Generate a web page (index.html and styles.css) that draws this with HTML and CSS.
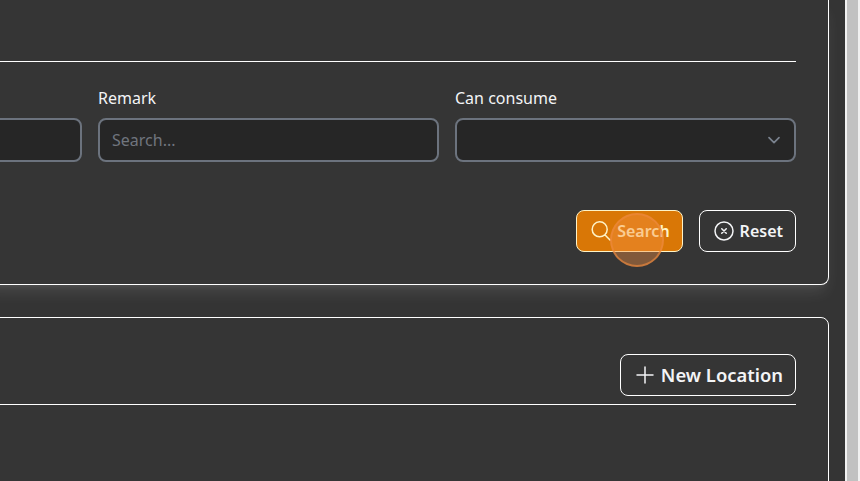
FILE: index.html
```
<!DOCTYPE html>
<html lang="en">
<head>
<meta charset="utf-8">
<title>Locations</title>
<link rel="stylesheet" href="styles.css">
</head>
<body>
<div class="window">
  <main class="page">
    <section class="card filters">
      <div class="filters-head"></div>
      <form class="fields">
        <div class="field"><span class="label"></span><div class="control"></div></div>
        <div class="field"><span class="label">Remark</span><div class="control">Search...</div></div>
        <div class="field"><span class="label">Can consume</span>
          <div class="control select">
            <svg width="20" height="20" viewBox="0 0 20 20"><path d="M5 7.7l5 5 5-5"/></svg>
          </div>
        </div>
      </form>
      <div class="actions">
        <button class="button primary">
          <svg width="24" height="24" viewBox="0 0 24 24"><path d="M21 21l-5.2-5.2m0 0A7.5 7.5 0 1 0 5.2 5.2a7.5 7.5 0 0 0 10.6 10.6z"/></svg>
          <span>Search</span>
          <i class="tap"></i>
        </button>
        <button class="button">
          <svg width="24" height="24" viewBox="0 0 24 24"><circle cx="12" cy="12" r="9"/><path d="M9.75 9.75l4.5 4.5m0-4.5l-4.5 4.5"/></svg>
          <span>Reset</span>
        </button>
      </div>
    </section>
    <section class="card results">
      <div class="results-head">
        <button class="button large">
          <svg width="24" height="24" viewBox="0 0 24 24"><path d="M12 4v16m8-8H4"/></svg>
          <span>New Location</span>
        </button>
      </div>
    </section>
  </main>
  <div class="scrollbar"></div>
</div>
</body>
</html>
```
FILE: styles.css
```
* { box-sizing: border-box; }
body {
  margin: 0;
  background: #343434;
  color: #f3f4f6;
  font: 16px/24px "Noto Sans", sans-serif;
  overflow: hidden;
}
.window { display: flex; height: 481px; overflow: hidden; }
.page { flex: 1; min-width: 0; padding-right: 16px; overflow: hidden; }
.card {
  margin-left: -20px;
  padding: 0 32px 0 0;
  background: #353535;
  border: 1px solid #fff;
}
.filters {
  height: 285px;
  border-top: 0;
  border-radius: 0 0 8px 8px;
  box-shadow: 0 10px 15px -3px rgba(255, 255, 255, .1), 0 4px 6px -4px rgba(255, 255, 255, .1);
}
.filters-head { height: 62px; border-bottom: 1px solid #fff; }
.fields {
  display: grid;
  grid-template-columns: 341px 341px 341px;
  justify-content: end;
  gap: 16px;
  margin: 24px 0 0 -280px;
}
.label { display: block; height: 24px; margin-bottom: 8px; }
.control {
  display: flex;
  align-items: center;
  height: 44px;
  padding: 0 12px;
  border: 2px solid #6c737e;
  border-radius: 8px;
  background: #262626;
  color: #70757e;
}
.select { justify-content: flex-end; padding-right: 10px; }
svg {
  flex: none;
  fill: none;
  stroke: currentColor;
  stroke-width: 1.5;
  stroke-linecap: round;
  stroke-linejoin: round;
}
.select svg { stroke: #7a828e; stroke-width: 1.7; }
.actions { display: flex; justify-content: flex-end; gap: 16px; margin-top: 48px; }
.button {
  position: relative;
  display: flex;
  align-items: center;
  gap: 4px;
  height: 42px;
  padding: 0 12px;
  border: 1px solid #fff;
  border-radius: 8px;
  background: transparent;
  color: #f3f4f6;
  font: 600 16px/24px "Noto Sans", sans-serif;
  white-space: nowrap;
}
.primary { background: #d97706; border-color: #fef3c7; color: #fef3c7; }
.tap {
  position: absolute;
  left: 33px;
  top: 2px;
  width: 54px;
  height: 54px;
  border: 2px solid rgba(236, 136, 62, .65);
  border-radius: 50%;
  background: rgba(245, 145, 67, .4);
}
.large { font-size: 18.4px; line-height: 28px; }
.results {
  height: 200px;
  margin-top: 32px;
  border-radius: 8px;
}
.results-head {
  display: flex;
  justify-content: flex-end;
  height: 87px;
  padding-top: 36px;
  border-bottom: 1px solid #fff;
}
.scrollbar {
  width: 15px;
  background: #c1c1c1;
  border: solid #f1f1f1;
  border-width: 0 2px;
}
```
